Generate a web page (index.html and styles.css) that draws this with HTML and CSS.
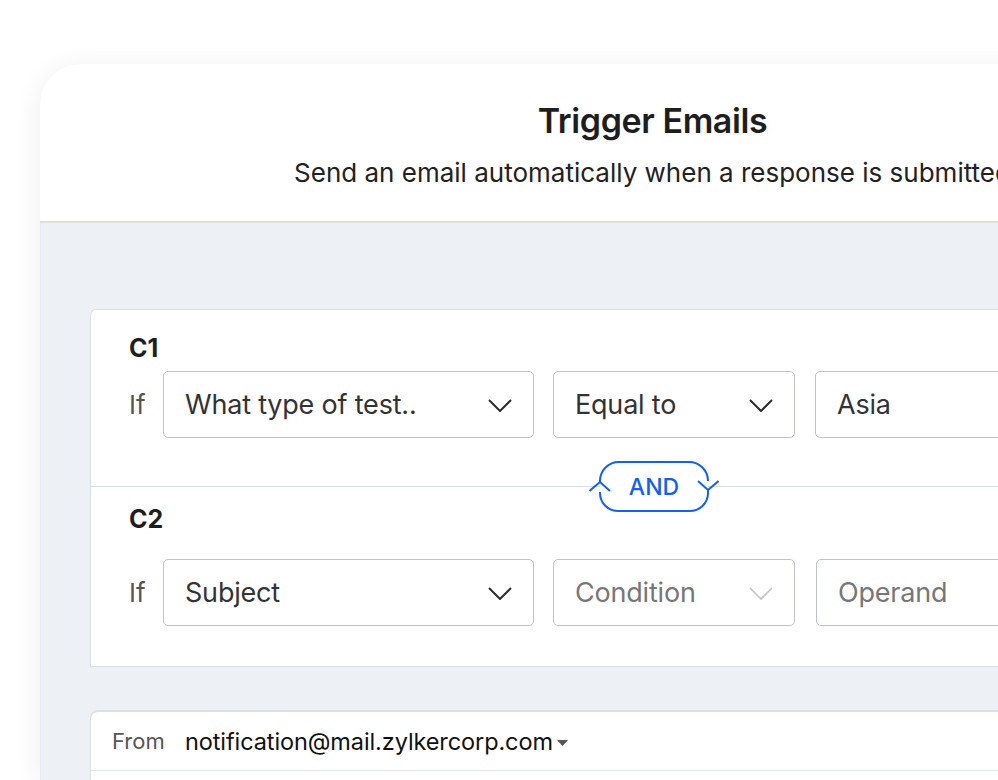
FILE: index.html
```html
<!DOCTYPE html>
<html>
<head>
<meta charset="utf-8">
<link rel="stylesheet" href="styles.css">
</head>
<body>
<div class="frame">
  <div class="header">
    <div class="title">Trigger Emails</div>
    <div class="subtitle">Send an email automatically when a response is submitted</div>
  </div>
  <div class="content">
    <div class="cond-card">
      <div class="cond cond-1">
        <div class="cond-label">C1</div>
        <div class="row">
          <span class="if">If</span>
          <div class="field field-lg">
            <span class="val">What type of test..</span>
            <svg class="chev" width="24" height="13" viewBox="0 0 24 13"><path d="M1 1 L12 12 L23 1" fill="none" stroke="#2b2b2b" stroke-width="2"/></svg>
          </div>
          <div class="field field-md">
            <span class="val">Equal to</span>
            <svg class="chev" width="24" height="13" viewBox="0 0 24 13"><path d="M1 1 L12 12 L23 1" fill="none" stroke="#2b2b2b" stroke-width="2"/></svg>
          </div>
          <div class="field field-rest">
            <span class="val">Asia</span>
          </div>
        </div>
      </div>
      <div class="cond cond-2">
        <div class="and-pill">
          <svg width="130" height="52" viewBox="0 0 130 52">
            <path d="M11 21 V20 A19 19 0 0 1 30 1 H100 A19 19 0 0 1 119 20 V21 H11 Z" fill="#fff"/>
            <rect x="11" y="20" width="108" height="12" fill="#fff"/>
            <path d="M11 31 V32 A18 18 0 0 0 29 50 H101 A18 18 0 0 0 119 32 V29 Z" fill="#fff"/>
            <path d="M11 21 V20 A19 19 0 0 1 30 1 H100 A19 19 0 0 1 119 20" fill="none" stroke="#1560f0" stroke-width="2"/>
            <path d="M119 29 V32 A18 18 0 0 1 101 50 H29 A18 18 0 0 1 11 32 V31" fill="none" stroke="#1560f0" stroke-width="2"/>
            <path d="M0.5 30 L11 21 L21 30" fill="none" stroke="#1560f0" stroke-width="2"/>
            <path d="M109 20 L119 29 L129.5 20" fill="none" stroke="#1560f0" stroke-width="2"/>
          </svg>
          <span class="and-text">AND</span>
        </div>
        <div class="cond-label">C2</div>
        <div class="row">
          <span class="if">If</span>
          <div class="field field-lg">
            <span class="val">Subject</span>
            <svg class="chev" width="24" height="13" viewBox="0 0 24 13"><path d="M1 1 L12 12 L23 1" fill="none" stroke="#2b2b2b" stroke-width="2"/></svg>
          </div>
          <div class="field field-md">
            <span class="val placeholder">Condition</span>
            <svg class="chev" width="24" height="13" viewBox="0 0 24 13"><path d="M1 1 L12 12 L23 1" fill="none" stroke="#c4c4c4" stroke-width="1.6"/></svg>
          </div>
          <div class="field field-rest field-rest-2">
            <span class="val placeholder">Operand</span>
          </div>
        </div>
      </div>
    </div>
    <div class="mail-card">
      <div class="from-row">
        <span class="from-label">From</span>
        <span class="from-val">notification@mail.zylkercorp.com</span>
        <svg class="caret" width="11" height="6" viewBox="0 0 11 6"><path d="M0 0 H11 L5.5 6 Z" fill="#555"/></svg>
      </div>
    </div>
  </div>
</div>
</body>
</html>
```

FILE: styles.css
```css
html, body {
  margin: 0;
  padding: 0;
  background: #ffffff;
  overflow: hidden;
  width: 998px;
  height: 780px;
}

body {
  font-family: Inter, "Noto Sans", sans-serif;
  color: #222;
}

.frame {
  margin-top: 64px;
  margin-left: 40px;
  width: 1000px;
  height: 716px;
  border-radius: 40px 0 0 0;
  background: #edf0f5;
  box-shadow: 0 4px 28px rgba(0, 0, 0, 0.07);
  overflow: hidden;
}

.header {
  height: 157px;
  background: #fff;
  border-bottom: 2px solid #dedfd8;
  width: 1225px;
  text-align: center;
}

.title {
  padding-top: 37px;
  font-size: 34px;
  line-height: 40px;
  font-weight: 600;
  color: #1e1e1e;
  letter-spacing: -0.4px;
}

.subtitle {
  margin-top: 16px;
  font-size: 26px;
  line-height: 32px;
  color: #222;
  letter-spacing: 0;
  white-space: nowrap;
}

.content {
  padding: 86px 0 0 50px;
  border-left: 1px solid #e6ebf2;
}

.cond-card {
  background: #fff;
  border: 1px solid #d9dee6;
  border-right: none;
  border-radius: 6px 0 0 0;
  margin-left: -1px;
}

.cond {
  position: relative;
  padding-left: 38px;
}

.cond-1 {
  padding-top: 24px;
  padding-bottom: 48px;
  border-bottom: 1px solid #d6dde7;
}

.cond-2 {
  padding-top: 18px;
  padding-bottom: 40px;
}

.cond-label {
  font-size: 25px;
  line-height: 28px;
  font-weight: 700;
  color: #1e1e1e;
}

.cond-1 .cond-label {
  margin-bottom: 9px;
}

.cond-2 .cond-label {
  margin-bottom: 26px;
}

.row {
  display: flex;
  align-items: center;
}

.if {
  flex: 0 0 34px;
  font-size: 26px;
  color: #555;
}

.field {
  flex: 0 0 auto;
  height: 67px;
  box-sizing: border-box;
  border: 1px solid #bfc3c9;
  border-radius: 5px;
  display: flex;
  align-items: center;
  justify-content: space-between;
  padding: 0 21px 0 21px;
  font-size: 27px;
  color: #333;
  letter-spacing: -0.2px;
  white-space: nowrap;
}

.field-lg {
  width: 371px;
}

.field-md {
  width: 242px;
  margin-left: 19px;
}

.field-rest {
  width: 300px;
  margin-left: 20px;
}

.field-rest-2 {
  margin-left: 21px;
}

.placeholder {
  color: #777;
}

.chev {
  display: block;
  margin-top: 2px;
}

.and-pill {
  position: absolute;
  left: 498px;
  top: -26px;
  width: 130px;
  height: 52px;
}

.and-pill svg {
  position: absolute;
  left: 0;
  top: 0;
}

.and-text {
  position: absolute;
  left: 0;
  top: 0;
  width: 130px;
  line-height: 52px;
  text-align: center;
  font-size: 23px;
  font-weight: 500;
  color: #1560f0;
}

.mail-card {
  margin-top: 43px;
  background: #fff;
  border: 1px solid #dadde3;
  border-top: 2px solid #dcdfe4;
  border-right: none;
  border-radius: 8px 0 0 0;
  margin-left: -1px;
  height: 200px;
}

.from-row {
  height: 58px;
  border-bottom: 1px solid #e3e6ea;
  display: flex;
  align-items: center;
  padding-left: 21px;
}

.from-label {
  flex: 0 0 73px;
  font-size: 22px;
  color: #555;
}

.from-val {
  font-size: 23.5px;
  color: #111;
  letter-spacing: -0.1px;
  white-space: nowrap;
}

.caret {
  flex: 0 0 auto;
  margin-left: 4px;
  margin-top: 3px;
}
```
